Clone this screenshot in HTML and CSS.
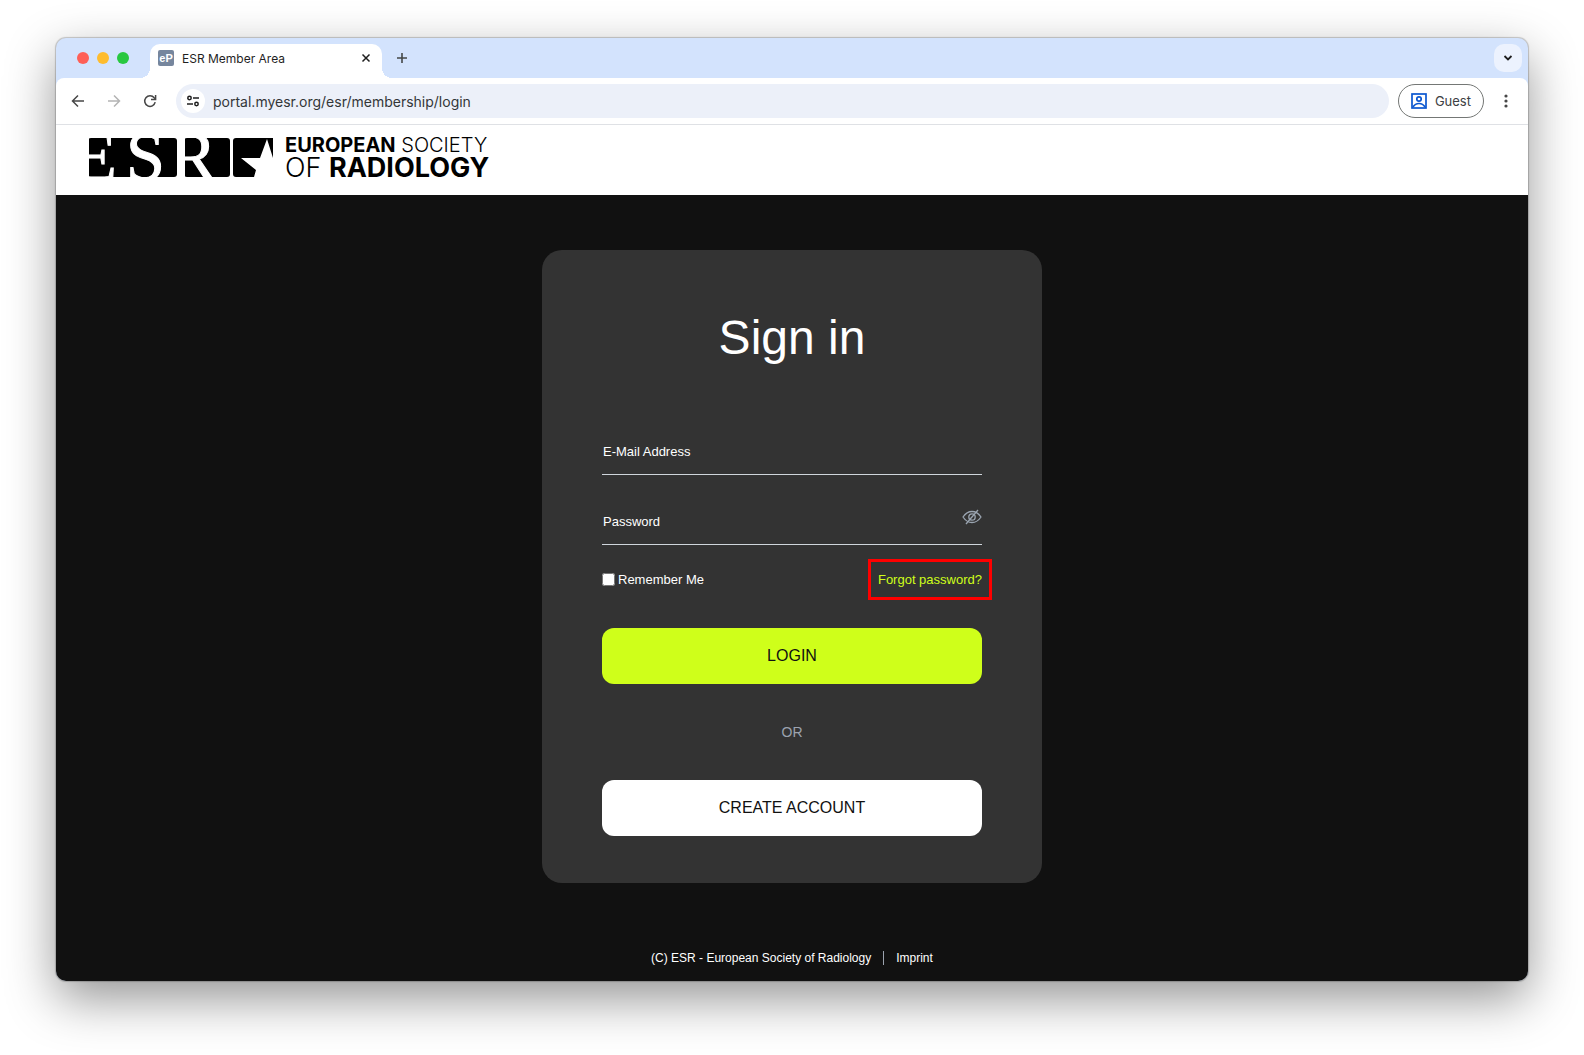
FILE: index.html
```html
<!DOCTYPE html>
<html lang="en">
<head>
  <meta charset="UTF-8" />
  <meta name="viewport" content="width=device-width, initial-scale=1.0" />
  <title>ESR Member Area</title>
  <link rel="stylesheet" href="styles.css">
</head>
<body>
  <div class="window">
    <!-- Tab strip -->
    <div class="tab-strip">
      <div class="lights">
        <span class="light red"></span>
        <span class="light yellow"></span>
        <span class="light green"></span>
      </div>
      <div class="tab">
        <span class="favicon">eP</span>
        <span class="tab-title">ESR Member Area</span>
        <button class="icon-button tab-close" aria-label="Close tab">
          <svg width="10" height="10" viewBox="0 0 10 10"><path d="M1.5 1.5l7 7M8.5 1.5l-7 7" stroke="#1f1f1f" stroke-width="1.5"/></svg>
        </button>
      </div>
      <button class="icon-button new-tab" aria-label="New tab">
        <svg width="12" height="12" viewBox="0 0 12 12"><path d="M6 1v10M1 6h10" stroke="#444746" stroke-width="1.6"/></svg>
      </button>
      <button class="icon-button tab-search" aria-label="Search tabs">
        <svg width="10" height="10" viewBox="0 0 10 10"><path d="M1.5 3l3.5 3.5L8.5 3" fill="none" stroke="#1f1f1f" stroke-width="1.8"/></svg>
      </button>
    </div>

    <!-- Toolbar -->
    <div class="toolbar">
      <div class="nav-buttons">
        <button class="icon-button" aria-label="Back">
          <svg width="14" height="14" viewBox="0 0 14 14"><path d="M13 7H2M7 1.5L1.5 7L7 12.5" fill="none" stroke="#474747" stroke-width="1.5"/></svg>
        </button>
        <button class="icon-button" aria-label="Forward">
          <svg width="14" height="14" viewBox="0 0 14 14"><path d="M1 7h11M7 1.5L12.5 7L7 12.5" fill="none" stroke="#b4b4b4" stroke-width="1.5"/></svg>
        </button>
        <button class="icon-button" aria-label="Reload">
          <svg width="14" height="14" viewBox="0 0 14 14"><path d="M12.2 8.2A5.3 5.3 0 1 1 11.2 3.8L12.4 5" fill="none" stroke="#474747" stroke-width="1.5"/><path d="M12.6 1v4.5H8" fill="none" stroke="#474747" stroke-width="1.5"/></svg>
        </button>
      </div>
      <label class="address-bar">
        <span class="site-info">
          <svg width="14" height="14" viewBox="0 0 14 14" fill="none" stroke="#1f1f1f" stroke-width="1.5"><circle cx="3.5" cy="4" r="1.7"/><path d="M7 4h6M1 10h6"/><circle cx="10.5" cy="10" r="1.7"/></svg>
        </span>
        <input type="text" class="url" value="portal.myesr.org/esr/membership/login" aria-label="Address">
      </label>
      <button class="guest">
        <svg width="16" height="16" viewBox="0 0 16 16" fill="none" stroke="#0b57d0" stroke-width="1.7"><rect x="1" y="1" width="14" height="14"/><circle cx="8" cy="6" r="2.2"/><path d="M2 14c1.5-2.5 3.5-3.5 6-3.5s4.5 1 6 3.5"/></svg>
        Guest
      </button>
      <button class="icon-button menu" aria-label="Menu">
        <svg width="4" height="14" viewBox="0 0 4 14" fill="#474747"><circle cx="2" cy="2" r="1.6"/><circle cx="2" cy="7" r="1.6"/><circle cx="2" cy="12" r="1.6"/></svg>
      </button>
    </div>

    <!-- Site header -->
    <header class="site-header">
      <svg class="logo" width="185" height="39" viewBox="0 0 185 39" aria-hidden="true">
        <rect width="89" height="39" rx="3"/>
        <rect x="96" width="46" height="39" rx="3"/>
        <path d="M148 0h37v20L179 1l-7 19h-19l15 12l-2 7h-18q-3 0-3-3V3q0-3 3-3z"/>
        <g class="logo-initials">
          <text x="-14" y="42">E</text>
          <text x="38" y="42">S</text>
          <text x="82" y="42">R</text>
        </g>
      </svg>
      <div class="logo-name">
        <div class="logo-line"><b>EUROPEAN</b> SOCIETY</div>
        <div class="logo-line large">OF <b>RADIOLOGY</b></div>
      </div>
    </header>

    <!-- Login page -->
    <main class="page">
      <form class="card">
        <h1>Sign in</h1>
        <div class="field">
          <label for="email">E-Mail Address</label>
          <input type="email" id="email">
        </div>
        <div class="field">
          <label for="password">Password</label>
          <input type="password" id="password">
          <button type="button" class="icon-button show-password" aria-label="Show password">
            <svg width="20" height="16" viewBox="0 0 20 16" fill="none" stroke="#9aa4b0" stroke-width="1.3"><path d="M1 8c2.5-3.7 5.5-5.5 9-5.5s6.5 1.8 9 5.5c-2.5 3.7-5.5 5.5-9 5.5S3.5 11.7 1 8z"/><circle cx="10" cy="8" r="3.2"/><path d="M16 1L4 15"/></svg>
          </button>
        </div>
        <div class="options">
          <label class="remember"><input type="checkbox">Remember Me</label>
          <a href="#" class="forgot">Forgot password?</a>
        </div>
        <button type="submit" class="button login">LOGIN</button>
        <p class="or">OR</p>
        <button type="button" class="button create">CREATE ACCOUNT</button>
      </form>
      <footer>
        <span>(C) ESR - European Society of Radiology</span>
        <a href="#">Imprint</a>
      </footer>
    </main>
  </div>
</body>
</html>
```
FILE: styles.css
```css
* {
  box-sizing: border-box;
}

body {
  margin: 0;
  padding: 38px 56px 74px;
  min-height: 100vh;
  display: flex;
  background: #fff;
  font-family: "Liberation Sans", Arial, sans-serif;
}

button,
input {
  font-family: inherit;
}

.window {
  flex: 1;
  display: flex;
  flex-direction: column;
  background: #d3e3fd;
  border-radius: 10px;
  overflow: hidden;
  box-shadow: 0 0 1px 1px rgba(0, 0, 0, 0.2), 0 18px 50px rgba(0, 0, 0, 0.42);
}

.icon-button {
  display: flex;
  align-items: center;
  justify-content: center;
  padding: 0;
  border: none;
  background: none;
  cursor: pointer;
}

/* Tab strip */
.tab-strip {
  display: flex;
  align-items: center;
  height: 40px;
  padding: 0 6px 0 21px;
}

.lights {
  display: flex;
  gap: 8px;
  margin-right: 21px;
}

.light {
  width: 12px;
  height: 12px;
  border-radius: 50%;
}

.red {
  background: #fe5f57;
}

.yellow {
  background: #febc2e;
}

.green {
  background: #28c840;
}

.tab {
  position: relative;
  align-self: flex-end;
  display: flex;
  align-items: center;
  width: 232px;
  height: 34px;
  padding: 0 11px 6px 8px;
  background: #fff;
  border-radius: 10px 10px 0 0;
}

/* Curved feet of the tab */
.tab::before,
.tab::after {
  content: "";
  position: absolute;
  bottom: 0;
  width: 10px;
  height: 10px;
}

.tab::before {
  right: 100%;
  background: radial-gradient(circle at 0 0, #d3e3fd 10px, #fff 10px);
}

.tab::after {
  left: 100%;
  background: radial-gradient(circle at 100% 0, #d3e3fd 10px, #fff 10px);
}

.favicon {
  width: 16px;
  height: 16px;
  margin-right: 8px;
  border-radius: 2px;
  background: #76869d;
  color: #fff;
  font-size: 11px;
  font-weight: bold;
  line-height: 16px;
  text-align: center;
}

.tab-title {
  flex: 1;
  color: #1f1f1f;
  font-family: Inter, sans-serif;
  font-size: 12px;
}

.new-tab {
  margin-left: 14px;
}

.tab-search {
  width: 28px;
  height: 28px;
  margin-left: auto;
  border-radius: 10px;
  background: #ecf2fe;
}

/* Toolbar */
.toolbar {
  display: flex;
  align-items: center;
  gap: 9px;
  height: 47px;
  padding: 0 18px 0 15px;
  border-bottom: 1px solid #dfe1e5;
  border-radius: 8px 8px 0 0;
  background: #fff;
}

.nav-buttons {
  display: flex;
  gap: 22px;
  margin-right: 10px;
}

.address-bar {
  flex: 1;
  display: flex;
  align-items: center;
  gap: 8px;
  height: 34px;
  padding: 0 5px;
  border-radius: 17px;
  background: #ecf0f9;
}

.site-info {
  display: flex;
  align-items: center;
  justify-content: center;
  width: 24px;
  height: 24px;
  border-radius: 50%;
  background: #fff;
}

.url {
  flex: 1;
  padding: 0;
  border: none;
  outline: none;
  background: none;
  color: #333638;
  font-family: Inter, sans-serif;
  font-size: 14px;
}

.guest {
  display: flex;
  align-items: center;
  gap: 8px;
  height: 34px;
  padding: 0 12px;
  border: 1px solid #747775;
  border-radius: 17px;
  background: #fff;
  color: #3c4043;
  font-family: Inter, sans-serif;
  font-size: 13px;
  white-space: nowrap;
}

.menu {
  width: 8px;
  margin-left: 9px;
}

/* Site header */
.site-header {
  display: flex;
  gap: 12px;
  padding: 13px 32px 18px;
  background: #fff;
}

.logo {
  display: block;
  overflow: visible;
}

.logo-initials {
  fill: #fff;
  stroke: #fff;
  stroke-width: 1px;
  font-family: "Liberation Serif", serif;
  font-size: 70px;
}

.logo-name {
  height: 39px;
  color: #000;
  font-family: Inter, sans-serif;
  font-weight: 300;
  white-space: nowrap;
}

.logo-name b {
  font-weight: 700;
}

.logo-line {
  font-size: 20px;
  line-height: 15px;
}

.logo-line.large {
  font-size: 27px;
  line-height: 30px;
}

/* Login page */
.page {
  flex: 1;
  display: flex;
  flex-direction: column;
  align-items: center;
  padding: 55px 20px 15px;
  background: #111;
  color: #fff;
}

.card {
  width: 100%;
  max-width: 500px;
  padding: 60px 60px 47px;
  border-radius: 20px;
  background: #333;
}

h1 {
  margin: 0 0 68px;
  font-size: 48px;
  font-weight: normal;
  line-height: 56px;
  text-align: center;
}

.field {
  display: flex;
  align-items: center;
  height: 41px;
  margin-bottom: 29px;
  padding: 0 0 6px 1px;
  border-bottom: 1px solid #d0d6dc;
  font-size: 13px;
}

.field input {
  flex: 1;
  min-width: 0;
  border: none;
  outline: none;
  background: none;
  color: #fff;
  font-size: 13px;
}

.show-password {
  align-self: flex-start;
  margin-top: 5px;
}

.options {
  display: flex;
  align-items: center;
  justify-content: space-between;
  margin-top: -15px;
  font-size: 13px;
  line-height: 15px;
}

.remember {
  display: flex;
  align-items: center;
  gap: 3px;
}

.remember input {
  width: 13px;
  height: 13px;
  margin: 0;
}

.forgot {
  padding: 10px 7px;
  margin-right: -10px;
  border: 3px solid #f00;
  color: #cfff1a;
  text-decoration: none;
}

.button {
  display: block;
  width: 100%;
  height: 56px;
  border: none;
  border-radius: 12px;
  color: #111;
  font-size: 16px;
  cursor: pointer;
}

.login {
  margin-top: 28px;
  background: #cfff1a;
}

.create {
  background: #fff;
}

.or {
  margin: 38px 0;
  color: #9ca3af;
  font-size: 14px;
  line-height: 20px;
  text-align: center;
}

footer {
  display: flex;
  margin-top: 68px;
  font-size: 12px;
  line-height: 14px;
}

footer a {
  margin-left: 12px;
  padding-left: 12px;
  border-left: 1px solid #9ca3af;
  color: #fff;
  text-decoration: none;
}
```
